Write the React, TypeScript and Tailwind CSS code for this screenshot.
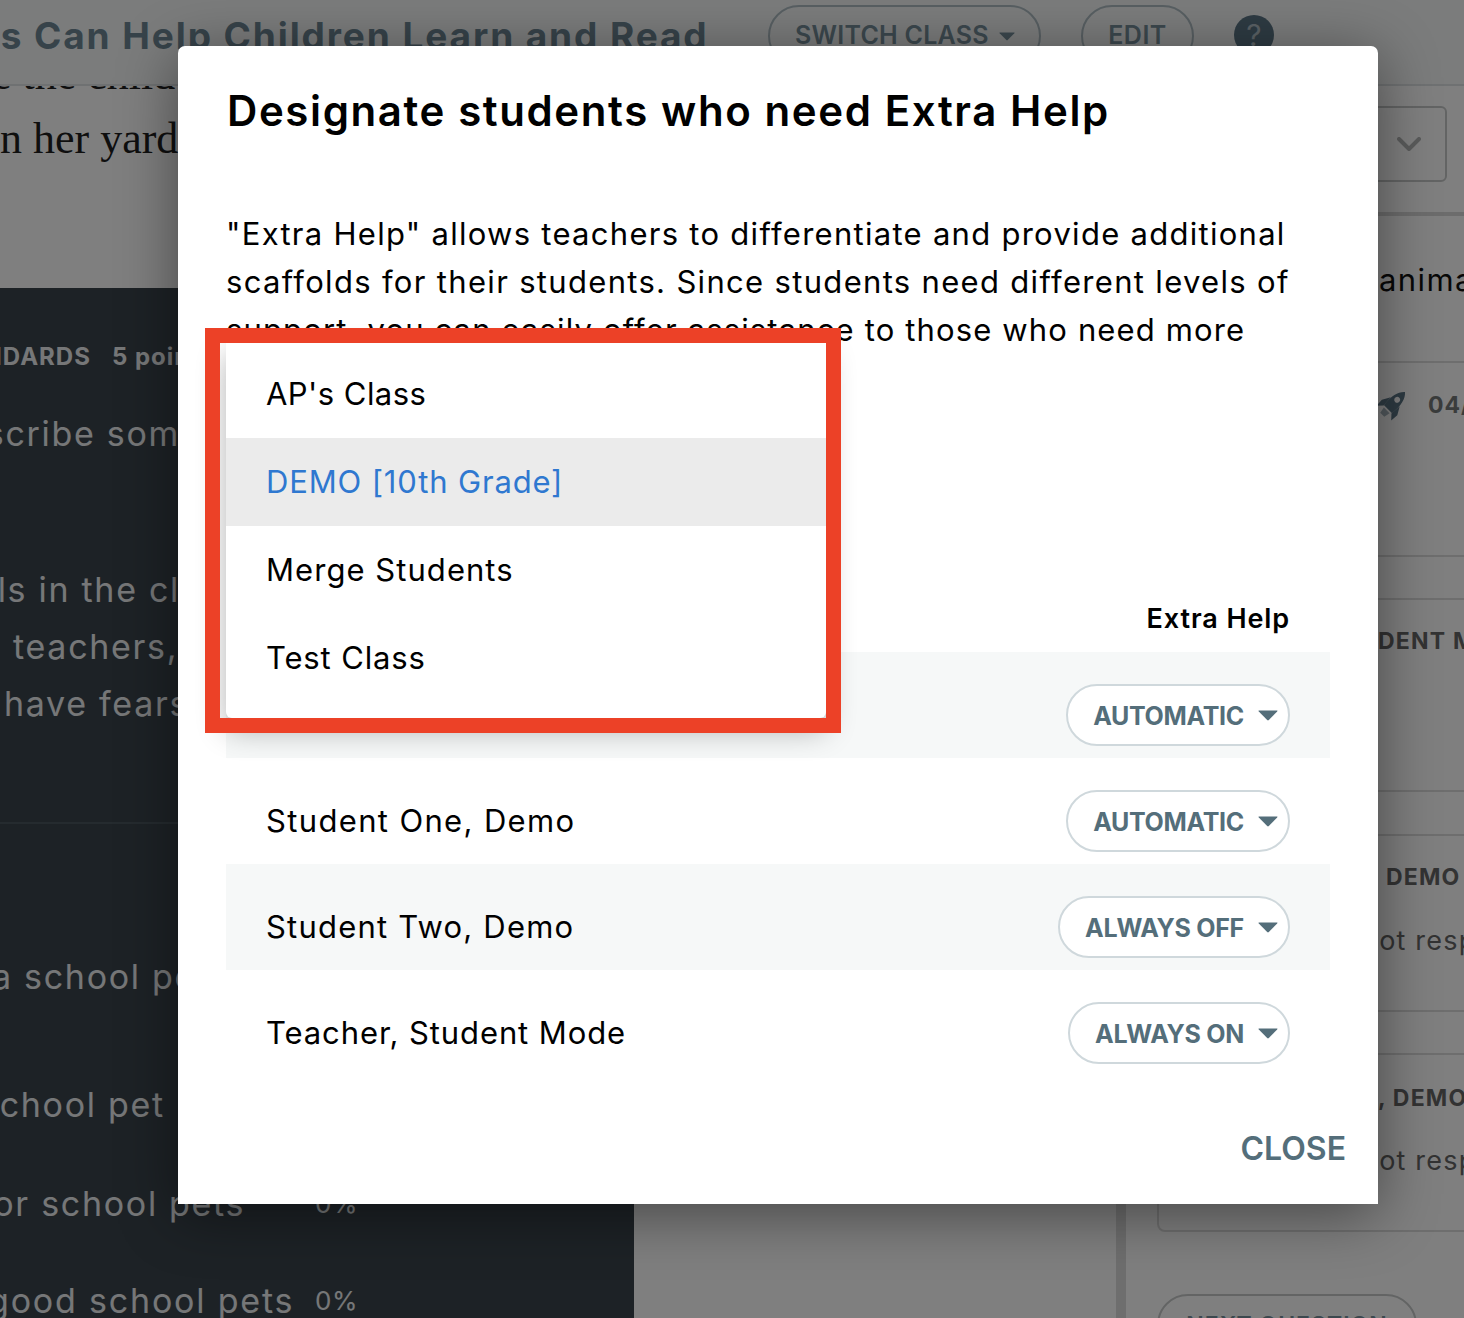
const Caret = ({ className }: { className: string }) => (
  <svg viewBox="0 0 20 11" className={className}>
    <path d="M1 0.5 H19 Q20 0.5 19.2 1.4 L10.8 10 Q10 10.8 9.2 10 L0.8 1.4 Q0 0.5 1 0.5 Z" fill="currentColor" />
  </svg>
);

const Pill = ({ label }: { label: string }) => (
  <div className="flex h-[62px] items-center rounded-[31px] border-2 border-[#cfd8dc] bg-white pl-[25px] pr-[10px]">
    <span className="pt-[3px] text-[25px] font-bold tracking-[-0.3px] text-[#546e7a] whitespace-nowrap">{label}</span>
    <Caret className="ml-[14px] h-[11px] w-[20px] text-[#546e7a]" />
  </div>
);

const rows = [
  { name: "", value: "AUTOMATIC", shade: true, track: "tracking-[1.25px]" },
  { name: "Student One, Demo", value: "AUTOMATIC", shade: false, track: "tracking-[1.35px]" },
  { name: "Student Two, Demo", value: "ALWAYS OFF", shade: true, track: "tracking-[1.2px]" },
  { name: "Teacher, Student Mode", value: "ALWAYS ON", shade: false, track: "tracking-[0.9px]" },
];

const menu = [
  { label: "AP's Class", track: "tracking-[0.45px]" },
  { label: "DEMO [10th Grade]", track: "tracking-[0.85px]" },
  { label: "Merge Students", track: "tracking-[1.05px]" },
  { label: "Test Class", track: "tracking-[0.85px]" },
];

const DarkLine = ({ className, children }: { className: string; children: React.ReactNode }) => (
  <div className={`h-[40px] whitespace-nowrap text-[34px] leading-[40px] tracking-[1.7px] text-[#eceff1] ${className}`}>{children}</div>
);

const Rocket = () => (
  <svg viewBox="0 0 28 28" className="h-[28px] w-[28px] overflow-visible text-[#5c7686]" fill="currentColor">
    <g transform="rotate(45 14 14) translate(14 14) scale(1.15) translate(-14 -14)">
      <path fillRule="evenodd" d="M14 -2 C18.5 2 20 8 19 19 H9 C8 8 9.5 2 14 -2 Z M14 5 a2.6 2.6 0 1 0 0.01 0 Z" />
      <path d="M8.5 10 L4.5 17 L5 24 L9.2 19.5 Z M19.5 10 L23.5 17 L23 24 L18.8 19.5 Z" />
      <path d="M10.5 20.5 H17.5 L16.5 26 H11.5 Z" opacity="0.55" />
    </g>
  </svg>
);

export default function App() {
  return (
    <div className="relative h-[1318px] w-[1464px] overflow-hidden bg-white font-[Inter,sans-serif]">
      {/* page behind the dialog */}
      <header className="flex h-[86px] items-start border-b-2 border-[#dfe3e4] bg-[#f6f9f9]">
        <div className="ml-[-64px] w-[832px] shrink-0 whitespace-nowrap pt-[13px] text-[37px] font-bold leading-[46px] tracking-[1.9px] text-[#6f8794]">
          Pets Can Help Children Learn and Read
        </div>
        <div className="mt-[5px] flex h-[62px] w-[273px] items-center rounded-[31px] border-2 border-[#b0bec5] pl-[25px]">
          <span className="text-[25px] font-semibold tracking-[0.25px] text-[#78909c]">SWITCH CLASS</span>
          <Caret className="ml-[10px] h-[9px] w-[16px] text-[#78909c]" />
        </div>
        <div className="ml-[40px] mt-[5px] flex h-[62px] w-[113px] items-center justify-center rounded-[31px] border-2 border-[#b0bec5]">
          <span className="text-[25px] font-semibold tracking-[0.5px] text-[#78909c]">EDIT</span>
        </div>
        <div className="ml-[40px] mt-[15px] flex h-[40px] w-[40px] items-center justify-center rounded-full bg-[#5c7686] text-[30px] text-[#b6c3ca]">?</div>
      </header>

      <div className="flex h-[1232px]">
        <div className="w-[634px] shrink-0">
          <div className="h-[202px] overflow-hidden font-['Liberation_Serif',serif] text-[44px] leading-[50px] text-[#1f1f1f]">
            <div className="ml-[-90px] mt-[-36px] whitespace-nowrap">to see the child</div>
            <div className="ml-[-99px] mt-[14px] whitespace-nowrap">plan in her yard</div>
          </div>
          <div className="h-[1030px] overflow-hidden bg-[#3a444c] pt-[49px]">
            <div className="ml-[-67px] flex h-[40px] items-center whitespace-nowrap text-[24px] font-bold tracking-[1px] text-[#eceff1]">
              STANDARDS<span className="ml-[21px]">5 points</span>
            </div>
            <DarkLine className="ml-[-62px] mt-[37px]">Describe some</DarkLine>
            <DarkLine className="ml-[-80px] mt-[116px]">Pupils in the class</DarkLine>
            <DarkLine className="ml-[13px] mt-[17px]">teachers,"</DarkLine>
            <DarkLine className="ml-[4px] mt-[17px]">have fears</DarkLine>
            <div className="mt-[98px] h-[2px] bg-[#4b565e]" />
            <DarkLine className="ml-[-8px] mt-[133px]">a school pet</DarkLine>
            <DarkLine className="ml-[-20px] mt-[88px]">school pet</DarkLine>
            <div className="ml-[-20px] mt-[58px] flex h-[40px] items-center whitespace-nowrap text-[34px] tracking-[1.7px] text-[#eceff1]">
              for school pets
              <span className="absolute left-[315px] text-[26px] tracking-[0.5px]">0%</span>
            </div>
            <div className="ml-[-12px] mt-[57px] flex h-[40px] items-center whitespace-nowrap text-[34px] tracking-[1.8px] text-[#eceff1]">
              good school pets
              <span className="absolute left-[315px] text-[26px] tracking-[0.5px]">0%</span>
            </div>
          </div>
        </div>

        <div className="w-[482px] shrink-0 bg-white" />
        <div className="w-[10px] shrink-0 bg-[#dcdcdc]" />

        <div className="w-[400px] shrink-0 pl-[31px]">
          <div className="mt-[20px] flex h-[76px] w-[290px] items-center justify-end rounded-[6px] border-2 border-[#c6c9c9] pr-[24px]">
            <svg viewBox="0 0 24 14" className="h-[14px] w-[24px]" fill="none" stroke="#b4b6b6" strokeWidth="4" strokeLinecap="round" strokeLinejoin="round">
              <path d="M2 2 L12 12 L22 2" />
            </svg>
          </div>
          <div className="ml-[-31px] mt-[30px] h-[4px] bg-[#d8d9d9]" />
          <div className="ml-[222px] mt-[44px] h-[40px] whitespace-nowrap text-[31px] leading-[40px] tracking-[1.4px] text-[#111]">animals</div>
          <div className="ml-[-31px] mt-[61px] h-[2px] bg-[#dcdcdc]" />
          <div className="ml-[221px] mt-[28px] flex h-[28px] items-center">
            <Rocket />
            <span className="ml-[22px] whitespace-nowrap text-[23px] font-bold tracking-[1px] text-[#757878]">04/12</span>
          </div>
          <div className="ml-[-31px] mt-[136px] h-[2px] bg-[#dcdcdc]" />
          <div className="mt-[41px] h-[194px] rounded-[8px] border-2 border-[#dcdcdc] pl-[219px] pt-[24px]">
            <div className="whitespace-nowrap text-[23px] font-bold tracking-[1.2px] text-[#666]">DENT M</div>
          </div>
          <div className="mt-[42px] h-[178px] rounded-[8px] border-2 border-[#dcdcdc] pl-[227px] pt-[24px]">
            <div className="whitespace-nowrap text-[23px] font-bold tracking-[1.2px] text-[#666]">DEMO</div>
            <div className="ml-[-24px] mt-[26px] whitespace-nowrap text-[27px] tracking-[1.2px] text-[#666]">not resp</div>
          </div>
          <div className="mt-[41px] h-[179px] rounded-[8px] border-2 border-[#dcdcdc] pl-[219px] pt-[26px]">
            <div className="whitespace-nowrap text-[23px] font-bold tracking-[1.2px] text-[#666]">, DEMO</div>
            <div className="ml-[-16px] mt-[25px] whitespace-nowrap text-[27px] tracking-[1.2px] text-[#666]">not resp</div>
          </div>
          <div className="mt-[62px] flex h-[62px] w-[260px] justify-center rounded-[31px] border-2 border-[#c6c9c9] pt-[12px]">
            <span className="whitespace-nowrap text-[23px] font-semibold tracking-[1px] text-[#78909c]">NEXT QUESTION</span>
          </div>
        </div>
      </div>

      {/* overlay */}
      <div className="absolute inset-0 bg-black/50" />

      {/* dialog */}
      <div className="absolute left-[178px] top-[46px] h-[1158px] w-[1200px] rounded-t-[7px] bg-white pt-[35px] text-black shadow-[0_10px_60px_rgba(0,0,0,0.45)]">
        <h1 className="ml-[49px] h-[60px] whitespace-nowrap text-[42px] font-semibold leading-[60px] tracking-[1.6px]">
          Designate students who need Extra Help
        </h1>
        <p className="ml-[48px] mt-[69px] h-[192px] whitespace-nowrap text-[31px] leading-[48px]">
          <span className="block tracking-[1.28px]">"Extra Help" allows teachers to differentiate and provide additional</span>
          <span className="block tracking-[1.32px]">scaffolds for their students. Since students need different levels of</span>
          <span className="block tracking-[1.14px]">support, you can easily offer assistance to those who need more</span>
        </p>
        <div className="ml-[48px] mt-[201px] flex h-[32px] w-[1104px] items-center justify-end pr-[40px] text-[27px] font-semibold leading-[32px] tracking-[0.9px]">
          Extra Help
        </div>
        <div className="ml-[48px] mt-[17px] w-[1104px]">
          {rows.map((r) => (
            <div key={r.value + r.name} className={`flex h-[106px] items-center justify-between pl-[40px] pr-[40px] pt-[20px] ${r.shade ? "bg-[#f6f8f8]" : "bg-white"}`}>
              <span className={`whitespace-nowrap text-[31px] ${r.track}`}>{r.name}</span>
              <Pill label={r.value} />
            </div>
          ))}
        </div>
        <div className="mt-[53px] h-[40px] pr-[32px] text-right text-[32px] font-semibold leading-[40px] text-[#546e7a]">CLOSE</div>

        {/* open class menu */}
        <div className="absolute left-[48px] top-[297px] h-[375px] w-[600px] rounded-b-[6px] bg-white pt-[7px] shadow-[0_12px_30px_rgba(0,0,0,0.3)]">
          {menu.map((c, i) => (
            <div key={c.label} className={`flex h-[88px] items-center pl-[40px] text-[31px] ${c.track} ${i === 1 ? "bg-[#ebebeb] text-[#2f78d0]" : ""}`}>
              {c.label}
            </div>
          ))}
        </div>
        {/* red annotation */}
        <div className="absolute left-[27px] top-[282px] h-[405px] w-[636px] border-[15px] border-[#ec4127]" />
      </div>
    </div>
  );
}
